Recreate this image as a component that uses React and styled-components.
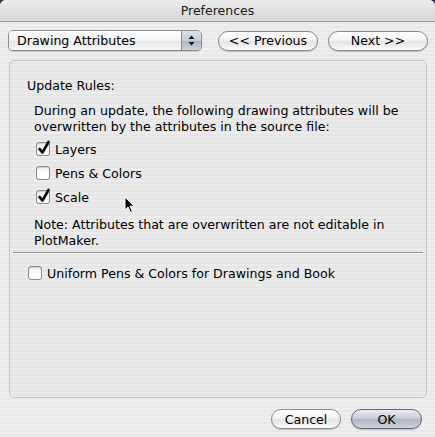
import React from "react";
import styled, { createGlobalStyle } from "styled-components";

const GlobalStyle = createGlobalStyle`
  html, body {
    margin: 0;
    padding: 0;
    background: #2c3450;
  }
  * { box-sizing: border-box; }
`;

const Window = styled.div`
  width: 435px;
  height: 437px;
  display: flex;
  flex-direction: column;
  font-family: "DejaVu Sans", "Lucida Grande", sans-serif;
  font-size: 12.6px;
  color: #000;
  border-radius: 6px 6px 0 0;
  overflow: hidden;
  background: repeating-linear-gradient(
    to bottom,
    #eeeeee 0px,
    #eeeeee 2px,
    #e8e8e8 2px,
    #e8e8e8 4px
  );
`;

const TitleBar = styled.div`
  height: 22px;
  flex: none;
  display: flex;
  align-items: center;
  justify-content: center;
  font-size: 12.5px;
  color: #1a1a1a;
  background: linear-gradient(to bottom, #ececec, #d6d6d6);
  border-bottom: 1px solid #9c9c9c;
`;

const Toolbar = styled.div`
  display: flex;
  align-items: center;
  margin: 8px 0 0 8px;
  height: 21px;
`;

const Popup = styled.div`
  width: 194px;
  height: 21px;
  display: flex;
  border: 1px solid #8c8c8c;
  border-radius: 5px;
  overflow: hidden;
  box-shadow: 0 1px 1px rgba(0, 0, 0, 0.15);
`;

const PopupLabel = styled.div`
  flex: 1;
  display: flex;
  align-items: center;
  padding-left: 8px;
  background: linear-gradient(to bottom, #ffffff, #f2f2f2 50%, #e6e6e6 51%, #f6f6f6);
`;

const PopupArrows = styled.div`
  width: 20px;
  display: flex;
  align-items: center;
  justify-content: center;
  border-left: 1px solid #8c8c8c;
  background: linear-gradient(to bottom, #dfe3ea, #c3cad6 50%, #aab3c2 51%, #cdd4de);
`;

const PushButton = styled.button`
  height: 20px;
  width: ${(p) => p.$w}px;
  margin-left: ${(p) => p.$gap}px;
  padding: 0;
  font-family: inherit;
  font-size: 12.6px;
  color: #000;
  border: 1px solid ${(p) => (p.$default ? "#5f6672" : "#8a8a8a")};
  border-radius: 10px;
  background: ${(p) =>
    p.$default
      ? "linear-gradient(to bottom, #e9ecf0, #c9ced6 45%, #adb5c1 55%, #cfd5dd)"
      : "linear-gradient(to bottom, #ffffff, #f3f3f3 45%, #e4e4e4 55%, #fafafa)"};
  box-shadow: 0 1px 1px rgba(0, 0, 0, 0.2);
`;

const GroupBox = styled.div`
  margin: 9px 0 0 9px;
  width: 418px;
  height: 338px;
  border: 1px solid #c4c4c4;
  border-radius: 5px;
  padding: 17px 0 0 0;
  background: rgba(0, 0, 0, 0.012);
`;

const Heading = styled.div`
  line-height: 16px;
  padding-left: 17px;
`;

const Indented = styled.div`
  padding-left: 24px;
  margin-top: 9px;
`;

const Para = styled.div`
  line-height: 16px;
`;

const CheckList = styled.div`
  margin-top: ${(p) => p.$top || 2}px;
  margin-left: 2px;
`;

const CheckRow = styled.label`
  display: flex;
  align-items: center;
  height: 24px;
  gap: 5px;
  padding-left: ${(p) => p.$indent || 0}px;
`;

const Box = styled.span`
  width: 14px;
  height: 14px;
  flex: none;
  border: 1px solid #8a8a8a;
  border-radius: 3px;
  background: linear-gradient(to bottom, #f0f0f0, #ffffff 60%);
  box-shadow: inset 0 1px 1px rgba(0, 0, 0, 0.15);
  position: relative;
`;

const Mark = styled.svg`
  position: absolute;
  left: 0px;
  top: -3px;
`;

const Note = styled.div`
  line-height: 16px;
  margin-top: 8px;
`;

const Separator = styled.div`
  height: 1px;
  background: #909090;
  margin: 3px 3px 0 3px;
  border-bottom: 1px solid #f8f8f8;
  box-sizing: content-box;
`;

const Footer = styled.div`
  display: flex;
  justify-content: flex-end;
  margin: 11px 13px 0 0;
`;

const Checkbox = ({ checked, label, indent }) => (
  <CheckRow $indent={indent}>
    <Box>
      {checked && (
        <Mark width="14" height="16" viewBox="0 0 14 16">
          <path
            d="M2.5 9 L5.5 12.5 L11.5 2"
            fill="none"
            stroke="#111"
            strokeWidth="2.7"
            strokeLinecap="round"
            strokeLinejoin="round"
          />
        </Mark>
      )}
    </Box>
    <span>{label}</span>
  </CheckRow>
);

const Cursor = styled.svg`
  position: absolute;
  left: 124px;
  top: 196px;
`;

const Stage = styled.div`
  position: relative;
`;

export default function App() {
  return (
    <Stage>
      <GlobalStyle />
      <Window>
        <TitleBar>Preferences</TitleBar>
        <Toolbar>
          <Popup>
            <PopupLabel>Drawing Attributes</PopupLabel>
            <PopupArrows>
              <svg width="7" height="11" viewBox="0 0 7 11">
                <path d="M3.5 0.5 L6.5 4 L0.5 4 Z" fill="#111" />
                <path d="M3.5 10.5 L6.5 7 L0.5 7 Z" fill="#111" />
              </svg>
            </PopupArrows>
          </Popup>
          <PushButton $w={100} $gap={16}>&lt;&lt; Previous</PushButton>
          <PushButton $w={100} $gap={10}>Next &gt;&gt;</PushButton>
        </Toolbar>
        <GroupBox>
          <Heading>Update Rules:</Heading>
          <Indented>
            <Para>
              During an update, the following drawing attributes will be
              <br />
              overwritten by the attributes in the source file:
            </Para>
            <CheckList>
              <Checkbox checked label="Layers" />
              <Checkbox label="Pens & Colors" />
              <Checkbox checked label="Scale" />
            </CheckList>
            <Note>
              Note: Attributes that are overwritten are not editable in
              <br />
              PlotMaker.
            </Note>
          </Indented>
          <Separator />
          <CheckList $top={7}>
            <Checkbox label="Uniform Pens & Colors for Drawings and Book" indent={16} />
          </CheckList>
        </GroupBox>
        <Footer>
          <PushButton $w={70} $gap={0}>Cancel</PushButton>
          <PushButton $w={71} $gap={10} $default>OK</PushButton>
        </Footer>
      </Window>
      <Cursor width="12" height="18" viewBox="0 0 12 18">
        <path
          d="M1 1 L1 14 L4 11 L6.5 16.5 L8.5 15.6 L6 10.2 L10 10.2 Z"
          fill="#000"
          stroke="#fff"
          strokeWidth="1"
        />
      </Cursor>
    </Stage>
  );
}
